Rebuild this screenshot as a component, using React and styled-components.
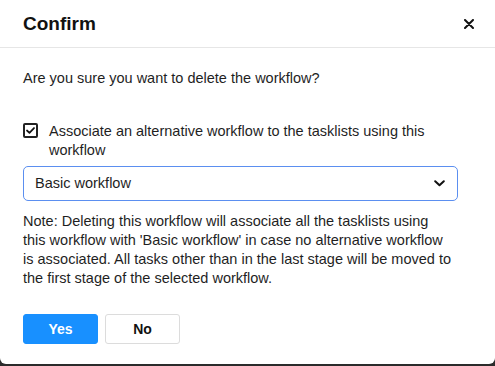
import React, { useState } from 'react';
import styled, { createGlobalStyle } from 'styled-components';

const GlobalStyle = createGlobalStyle`
  html, body {
    margin: 0;
    padding: 0;
    background: #2b2b2b;
  }
  body {
    font-family: 'Liberation Sans', Arial, sans-serif;
    color: #1f1f1f;
  }
`;

const Modal = styled.div`
  width: 495px;
  height: 364px;
  background: #fff;
  border-radius: 0 0 6px 6px;
  display: flex;
  flex-direction: column;
  box-sizing: border-box;
`;

const Header = styled.div`
  height: 48px;
  display: flex;
  align-items: center;
  justify-content: space-between;
  padding: 0 18px 0 23px;
  border-bottom: 1px solid #e6e6e6;
  box-sizing: border-box;
`;

const Title = styled.h1`
  margin: 0;
  font-size: 19px;
  font-weight: 700;
  color: #111;
`;

const CloseButton = styled.button`
  border: none;
  background: none;
  padding: 0;
  width: 16px;
  height: 16px;
  display: flex;
  align-items: center;
  justify-content: center;
  cursor: pointer;
`;

const Body = styled.div`
  padding: 21px 37px 0 23px;
  font-size: 14.5px;
  line-height: 19px;
`;

const Question = styled.p`
  margin: 0 0 34px;
`;

const CheckRow = styled.label`
  display: flex;
  align-items: flex-start;
  gap: 11px;
  cursor: pointer;
  margin-bottom: 6px;
`;

const Box = styled.span`
  flex: none;
  width: 15px;
  height: 15px;
  margin-top: 1px;
  border: 2px solid #222;
  border-radius: 2px;
  box-sizing: border-box;
  display: flex;
  align-items: center;
  justify-content: center;
`;

const Select = styled.div`
  height: 35px;
  border: 1px solid #5b8ff0;
  border-radius: 5px;
  display: flex;
  align-items: center;
  justify-content: space-between;
  padding: 0 12px 0 11px;
  box-sizing: border-box;
  margin-bottom: 11px;
`;

const Note = styled.p`
  margin: 0 0 26px;
  max-width: 431px;
`;

const Actions = styled.div`
  display: flex;
  gap: 7px;
`;

const Button = styled.button`
  width: 75px;
  height: 30px;
  border-radius: 3px;
  font-family: inherit;
  font-size: 14px;
  font-weight: 700;
  cursor: pointer;
  border: 1px solid ${(p) => (p.$primary ? '#1890ff' : '#dcdcdc')};
  background: ${(p) => (p.$primary ? '#1890ff' : '#fff')};
  color: ${(p) => (p.$primary ? '#fff' : '#111')};
`;

function App() {
  const [checked, setChecked] = useState(true);

  return (
    <>
      <GlobalStyle />
      <Modal>
        <Header>
          <Title>Confirm</Title>
          <CloseButton aria-label="Close">
            <svg width="10" height="10" viewBox="0 0 10 10">
              <path d="M1 1L9 9M9 1L1 9" stroke="#111" strokeWidth="2" strokeLinecap="round" />
            </svg>
          </CloseButton>
        </Header>
        <Body>
          <Question>Are you sure you want to delete the workflow?</Question>
          <CheckRow onClick={() => setChecked(!checked)}>
            <Box>
              {checked && (
                <svg width="9" height="7" viewBox="0 0 10 8">
                  <path d="M1 4L3.8 6.6L9 1.2" fill="none" stroke="#111" strokeWidth="2" strokeLinecap="round" strokeLinejoin="round" />
                </svg>
              )}
            </Box>
            <span>Associate an alternative workflow to the tasklists using this workflow</span>
          </CheckRow>
          <Select>
            <span>Basic workflow</span>
            <svg width="11" height="7" viewBox="0 0 11 7">
              <path d="M1.2 1.2L5.5 5.3L9.8 1.2" fill="none" stroke="#111" strokeWidth="2" strokeLinecap="round" strokeLinejoin="round" />
            </svg>
          </Select>
          <Note>
            Note: Deleting this workflow will associate all the tasklists using this workflow
            with 'Basic workflow' in case no alternative workflow is associated. All tasks other
            than in the last stage will be moved to the first stage of the selected workflow.
          </Note>
          <Actions>
            <Button $primary>Yes</Button>
            <Button>No</Button>
          </Actions>
        </Body>
      </Modal>
    </>
  );
}

export default App;
